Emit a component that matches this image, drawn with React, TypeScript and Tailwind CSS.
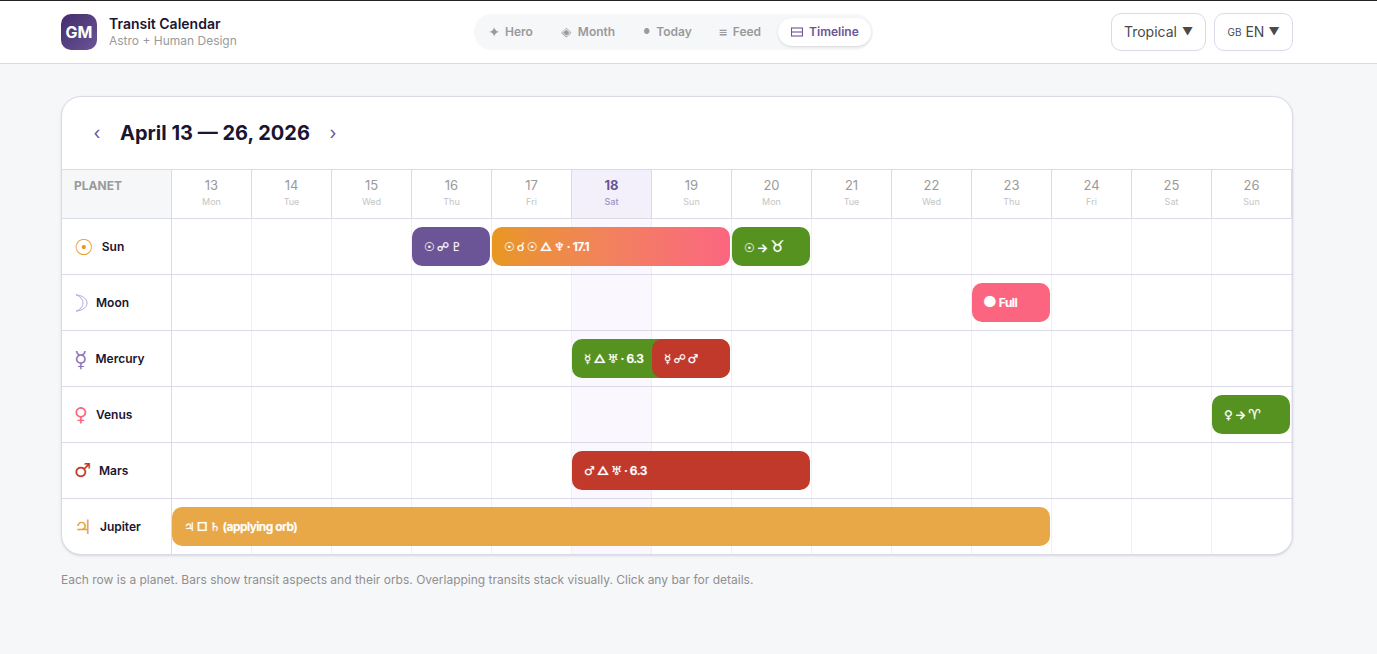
import type { ReactNode } from "react";

const navItems = [
  { icon: "✦", label: "Hero", box: "w-[10px] text-[14px]" },
  { icon: "◈", label: "Month", box: "w-[11px] text-[13px]" },
  { icon: "●", label: "Today", box: "w-[7px] text-[7px]" },
  { icon: "≡", label: "Feed", box: "w-[7px] text-[11px]" },
];

const days = [
  { date: 13, name: "Mon" },
  { date: 14, name: "Tue" },
  { date: 15, name: "Wed" },
  { date: 16, name: "Thu" },
  { date: 17, name: "Fri" },
  { date: 18, name: "Sat" },
  { date: 19, name: "Sun" },
  { date: 20, name: "Mon" },
  { date: 21, name: "Tue" },
  { date: 22, name: "Wed" },
  { date: 23, name: "Thu" },
  { date: 24, name: "Fri" },
  { date: 25, name: "Sat" },
  { date: 26, name: "Sun" },
];

const purple = "bg-[#6c5596]";
const green = "bg-[#55921f]";
const red = "bg-[#c0392b]";
const pink = "bg-[#fb6580]";

type Bar = { start: number; span: number; label: ReactNode; color: string };

const rows: { symbol: string; name: string; color: string; size: string; bars: Bar[] }[] = [
  {
    symbol: "☉",
    name: "Sun",
    color: "text-[#e8971e]",
    size: "text-[22px]",
    bars: [
      { start: 3, span: 1, label: "☉ ☍ ♇", color: purple },
      { start: 4, span: 3, label: "☉ ☌ ☉ △ ♆ · 17.1", color: "bg-gradient-to-r from-[#e8971e] to-[#fb6580]" },
      { start: 7, span: 1, label: <>☉ → <span className="text-base leading-none">♉</span></>, color: green },
    ],
  },
  {
    symbol: "",
    name: "Moon",
    color: "text-[#b9a5e0]",
    size: "",
    bars: [{ start: 10, span: 1, label: <><span className="-ml-px text-[15px] leading-none">●</span> Full</>, color: pink }],
  },
  {
    symbol: "☿",
    name: "Mercury",
    color: "text-[#8a76b8]",
    size: "text-[22px]",
    bars: [
      { start: 5, span: 2, label: "☿ △ ♅ · 6.3", color: green },
      { start: 6, span: 1, label: "☿ ☍ ♂", color: red },
    ],
  },
  {
    symbol: "♀",
    name: "Venus",
    color: "text-[#fb6580]",
    size: "text-[19px]",
    bars: [{ start: 13, span: 1, label: <>♀ → <span className="text-[14px] leading-none">♈</span></>, color: green }],
  },
  {
    symbol: "♂",
    name: "Mars",
    color: "text-[#c0392b]",
    size: "text-[19px]",
    bars: [{ start: 5, span: 3, label: "♂ △ ♅ · 6.3", color: red }],
  },
  {
    symbol: "♃",
    name: "Jupiter",
    color: "text-[#e8a33d]",
    size: "text-[20px]",
    bars: [{ start: 0, span: 11, label: "♃ □ ♄ (applying orb)", color: "bg-[#e8a33d]/95" }],
  },
];

function MoonIcon() {
  return (
    <svg width="13" height="18" viewBox="0 0 13 18" fill="none" stroke="#b9a5e0" strokeWidth="1" className="ml-px">
      <path d="M1 .8C6 1.2 12 4 12 9s-6 7.8-11 8.2C5 15.5 8 13 8 9S5 2.5 1 .8Z" />
    </svg>
  );
}

export default function App() {
  return (
    <div className="min-h-screen bg-[#f6f7f9] font-['Inter','DejaVu_Sans',sans-serif]">
      <header className="flex h-16 items-center border-t border-b border-t-[#222222] border-b-[#dcd9e8] bg-white pl-[61px] pr-[84px]">
        <div className="flex w-[413px] items-center gap-3">
          <div className="flex h-9 w-9 items-center justify-center rounded-[10px] bg-gradient-to-br from-[#432c6c] to-[#6c5596] text-base font-bold text-white">
            GM
          </div>
          <div>
            <p className="text-sm leading-[17px] font-semibold text-[#1a1530]">Transit Calendar</p>
            <p className="text-xs leading-[17px] text-[#9a9a9a]">Astro + Human Design</p>
          </div>
        </div>

        <nav className="flex h-9 w-[399px] items-center gap-[6px] rounded-full bg-[#f6f7f9] pl-1">
          {navItems.map((item) => (
            <a key={item.label} className="flex h-7 items-center gap-1.5 px-[11px] text-xs font-semibold text-[#9a9a9a]">
              <span className={`flex justify-center ${item.box}`}>{item.icon}</span>
              {item.label}
            </a>
          ))}
          <a className="flex h-7 items-center gap-1.5 rounded-full bg-white pr-3 pl-[13px] text-xs font-semibold text-[#6c5596] shadow-sm">
            <svg width="12" height="10" viewBox="0 0 12 10" fill="none" stroke="currentColor" strokeWidth="1.1">
              <rect x="0.5" y="1" width="11" height="8" />
              <path d="M0.5 5h11" />
            </svg>
            Timeline
          </a>
        </nav>

        <div className="ml-auto flex items-center gap-2">
          <button className="flex h-[38px] w-[95px] items-center justify-center gap-[5px] rounded-[10px] border border-[#dcd9e8] bg-white text-sm text-[#4a4a4a]">
            Tropical <span className="text-[11px]">▼</span>
          </button>
          <button className="flex h-[38px] w-[79px] items-center justify-center gap-1 rounded-[10px] border border-[#dcd9e8] bg-white text-sm text-[#4a4a4a]">
            <span className="text-[10px]">GB</span> EN <span className="text-[11px]">▼</span>
          </button>
        </div>
      </header>

      <main className="px-[61px] pt-8">
        <section className="w-[1232px] overflow-hidden rounded-[20px] border border-[#dcd9e8] bg-white shadow-sm">
          <div className="flex h-[73px] items-center gap-[9px] border-b border-[#dcd9e8] px-[21px]">
            <button className="h-7 w-7 text-lg text-[#6c5596]">‹</button>
            <h1 className="text-xl font-bold text-[#1a1530]">April 13 — 26, 2026</h1>
            <button className="h-7 w-7 text-lg text-[#6c5596]">›</button>
          </div>

          <div className="grid h-[49px] grid-cols-[110px_repeat(14,80px)] border-b border-[#dcd9e8]">
            <div className="border-r border-[#dcd9e8] bg-[#f6f7f9] px-3 pt-2 text-xs font-bold text-[#9a9a9a] uppercase">
              Planet
            </div>
            {days.map((day) => (
              <div
                key={day.date}
                className={
                  day.date === 18
                    ? "border-r border-[#dcd9e8] bg-[#f3f0fb] pt-[7px] text-center text-[#6c5596]"
                    : "border-r border-[#dcd9e8] pt-[7px] text-center text-[#9a9a9a]"
                }
              >
                <p className={day.date === 18 ? "text-[13px] leading-4 font-bold" : "text-[13px] leading-4"}>{day.date}</p>
                <p className={day.date === 18 ? "mt-[3px] text-[9px] leading-3 font-medium text-[#a08fc8]" : "mt-[3px] text-[9px] leading-3 text-[#c4c4c4]"}>
                  {day.name}
                </p>
              </div>
            ))}
          </div>

          {rows.map((row, i) => (
            <div
              key={row.name}
              className={
                i === rows.length - 1
                  ? "relative grid h-[55px] grid-cols-[110px_repeat(14,80px)]"
                  : "relative grid h-14 grid-cols-[110px_repeat(14,80px)] border-b border-[#dcd9e8]"
              }
            >
              <div className="flex items-center gap-2 border-r border-[#dcd9e8] pl-3">
                {row.symbol ? (
                  <span className={`leading-none ${row.size} ${row.color}`}>{row.symbol}</span>
                ) : (
                  <MoonIcon />
                )}
                <span className="text-xs font-semibold text-[#1a1530]">{row.name}</span>
              </div>
              {days.map((day) => (
                <div
                  key={day.date}
                  className={day.date === 18 ? "border-r border-[#f0eff5] bg-[#faf8fe]" : "border-r border-[#f0eff5]"}
                />
              ))}
              {row.bars.map((bar) => (
                <div
                  key={bar.start}
                  className={`absolute top-2 flex h-[39px] items-center rounded-[10px] px-3 text-xs font-semibold tracking-[-0.5px] whitespace-pre text-white [text-shadow:0_0_1px_rgba(255,255,255,0.6)] ${bar.color}`}
                  style={{ left: 110 + bar.start * 80, width: bar.span * 80 - 2 }}
                >
                  <span>{bar.label}</span>
                </div>
              ))}
            </div>
          ))}
        </section>

        <p className="mt-[17px] text-xs text-[#8f8f8f]">
          Each row is a planet. Bars show transit aspects and their orbs. Overlapping transits stack visually. Click any bar for details.
        </p>
      </main>
    </div>
  );
}
